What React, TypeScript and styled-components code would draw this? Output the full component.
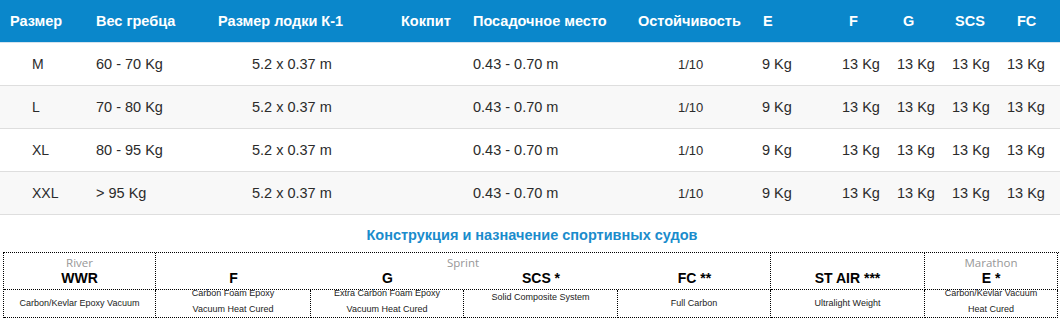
import React from 'react';
import styled, { createGlobalStyle } from 'styled-components';

const GlobalStyle = createGlobalStyle`
  html, body {
    margin: 0;
    padding: 0;
    background: #fff;
  }
  body {
    width: 1060px;
    font-family: "Liberation Sans", Arial, sans-serif;
  }
`;

interface Column {
  width: number;
  head: string;
  headPad: number;
  dataPad: number;
  size: number;
}

// widths add up to the full 1060px page
const columns: Column[] = [
  { width: 86, head: 'Размер', headPad: 10, dataPad: 32, size: 14 },
  { width: 122, head: 'Вес гребца', headPad: 10, dataPad: 10, size: 14.5 },
  { width: 183, head: 'Размер лодки К-1', headPad: 10, dataPad: 44, size: 14.5 },
  { width: 72, head: 'Кокпит', headPad: 10, dataPad: 10, size: 14.5 },
  { width: 165, head: 'Посадочное место', headPad: 10, dataPad: 10, size: 14.5 },
  { width: 125, head: 'Остойчивость', headPad: 10, dataPad: 50, size: 13 },
  { width: 79, head: 'E', headPad: 10, dataPad: 9, size: 14.5 },
  { width: 55, head: 'F', headPad: 17, dataPad: 10, size: 14.5 },
  { width: 55, head: 'G', headPad: 16, dataPad: 10, size: 14.5 },
  { width: 55, head: 'SCS', headPad: 13, dataPad: 10, size: 14.5 },
  { width: 63, head: 'FC', headPad: 20, dataPad: 10, size: 14.5 },
];

const gridTemplate = columns.map((c) => `${c.width}px`).join(' ');

const rows: string[][] = [
  ['M', '60 - 70 Kg', '5.2 x 0.37 m', '', '0.43 - 0.70 m', '1/10', '9 Kg', '13 Kg', '13 Kg', '13 Kg', '13 Kg'],
  ['L', '70 - 80 Kg', '5.2 x 0.37 m', '', '0.43 - 0.70 m', '1/10', '9 Kg', '13 Kg', '13 Kg', '13 Kg', '13 Kg'],
  ['XL', '80 - 95 Kg', '5.2 x 0.37 m', '', '0.43 - 0.70 m', '1/10', '9 Kg', '13 Kg', '13 Kg', '13 Kg', '13 Kg'],
  ['XXL', '> 95 Kg', '5.2 x 0.37 m', '', '0.43 - 0.70 m', '1/10', '9 Kg', '13 Kg', '13 Kg', '13 Kg', '13 Kg'],
];

const sprintModels = [
  { name: 'F', width: 155 },
  { name: 'G', width: 153 },
  { name: 'SCS *', width: 154 },
  { name: 'FC **', width: 153 },
];

const descriptions: { lines: string[]; valign: 'center' | 'top' | 'double' }[] = [
  { lines: ['Carbon/Kevlar Epoxy Vacuum'], valign: 'center' },
  { lines: ['Carbon Foam Epoxy', 'Vacuum Heat Cured'], valign: 'double' },
  { lines: ['Extra Carbon Foam Epoxy', 'Vacuum Heat Cured'], valign: 'double' },
  { lines: ['Solid Composite System'], valign: 'top' },
  { lines: ['Full Carbon'], valign: 'center' },
  { lines: ['Ultralight Weight'], valign: 'center' },
  { lines: ['Carbon/Kevlar Vacuum', 'Heat Cured'], valign: 'double' },
];

const App: React.FC = () => {
  return (
    <Page>
      <GlobalStyle />
      <SizeTable>
        <HeadRow>
          {columns.map((c) => (
            <HeadCell key={c.head} $pad={c.headPad}>
              {c.head}
            </HeadCell>
          ))}
        </HeadRow>
        {rows.map((row, i) => (
          <BodyRow key={row[0]} $alt={i % 2 === 1}>
            {row.map((value, j) => (
              <DataCell key={j} $pad={columns[j].dataPad} $size={columns[j].size}>
                {value}
              </DataCell>
            ))}
          </BodyRow>
        ))}
      </SizeTable>

      <Title>Конструкция и назначение спортивных судов</Title>

      <SpecTable>
        <ModelCell>
          <GroupLabel>River</GroupLabel>
          <ModelName>WWR</ModelName>
        </ModelCell>
        <ModelCell $span={4}>
          <GroupLabel>Sprint</GroupLabel>
          <SprintNames>
            {sprintModels.map((m) => (
              <ModelName key={m.name}>{m.name}</ModelName>
            ))}
          </SprintNames>
        </ModelCell>
        <ModelCell>
          <GroupLabel>&nbsp;</GroupLabel>
          <ModelName>ST AIR ***</ModelName>
        </ModelCell>
        <ModelCell>
          <GroupLabel>Marathon</GroupLabel>
          <ModelName>E *</ModelName>
        </ModelCell>

        {descriptions.map((d, i) => (
          <DescCell key={i} $valign={d.valign}>
            <DescText $double={d.valign === 'double'}>
              {d.lines.map((l) => (
                <div key={l}>{l}</div>
              ))}
            </DescText>
          </DescCell>
        ))}
      </SpecTable>
    </Page>
  );
};

const Page = styled.div`
  width: 1060px;
  height: 329px;
  overflow: hidden;
  background: #fff;
`;

const SizeTable = styled.div`
  display: flex;
  flex-direction: column;
`;

const HeadRow = styled.div`
  display: grid;
  grid-template-columns: ${gridTemplate};
  height: 42px;
  background: #0a87cb;
  border-bottom: 1px solid #d4e3ee;
`;

const HeadCell = styled.div<{ $pad: number }>`
  display: flex;
  align-items: center;
  padding-left: ${(p) => p.$pad}px;
  color: #fff;
  font-size: 14.5px;
  font-weight: bold;
  white-space: nowrap;
`;

const BodyRow = styled.div<{ $alt: boolean }>`
  display: grid;
  grid-template-columns: ${gridTemplate};
  height: 42px;
  background: ${(p) => (p.$alt ? '#f8f8f8' : '#fff')};
  border-bottom: 1px solid #dedede;
`;

const DataCell = styled.div<{ $pad: number; $size: number }>`
  display: flex;
  align-items: center;
  padding-left: ${(p) => p.$pad}px;
  color: #2b2b2b;
  font-size: ${(p) => p.$size}px;
  white-space: nowrap;
`;

const Title = styled.div`
  padding: 12px 0 9px 4px;
  text-align: center;
  color: #1a8ccc;
  font-size: 14.5px;
  font-weight: bold;
  line-height: 16px;
`;

const SpecTable = styled.div`
  display: grid;
  grid-template-columns: 152px 155px 153px 154px 153px 154px 133px;
  grid-template-rows: 37px 28px;
  margin-left: 3px;
  width: 1055px;
  border-top: 1px dotted #000;
  border-left: 1px dotted #000;
`;

const ModelCell = styled.div<{ $span?: number }>`
  grid-column: span ${(p) => p.$span ?? 1};
  display: flex;
  flex-direction: column;
  align-items: stretch;
  padding-top: 3px;
  border-right: 1px dotted #000;
  border-bottom: 1px dotted #000;
  text-align: center;
`;

const GroupLabel = styled.div`
  color: #979797;
  font-family: "Open Sans", "Liberation Sans", sans-serif;
  font-size: 11.5px;
  line-height: 14px;
`;

const ModelName = styled.div`
  color: #000;
  font-size: 14px;
  font-weight: bold;
  line-height: 17px;
  text-align: center;
`;

const SprintNames = styled.div`
  display: grid;
  grid-template-columns: ${sprintModels.map((m) => `${m.width}px`).join(' ')};
`;

const DescCell = styled.div<{ $valign: 'center' | 'top' | 'double' }>`
  display: flex;
  justify-content: center;
  align-items: ${(p) => (p.$valign === 'center' ? 'center' : 'flex-start')};
  border-right: 1px dotted #000;
  border-bottom: 1px dotted #000;
  color: #222;
  font-size: 9px;
  line-height: 15px;
  text-align: center;
  white-space: nowrap;
`;

const DescText = styled.div<{ $double: boolean }>`
  margin-top: ${(p) => (p.$double ? -4 : 0)}px;
  line-height: ${(p) => (p.$double ? 15.5 : 15)}px;
`;

export default App;
